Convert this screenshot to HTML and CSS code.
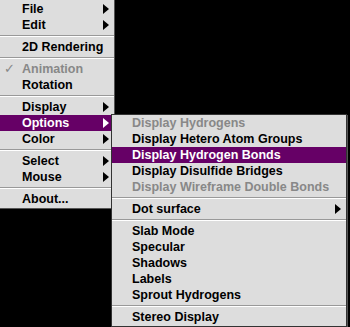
FILE: index.html
```html
<!DOCTYPE html>
<html lang="en">
<head>
    <meta charset="UTF-8">
    <title>menu</title>
    <link rel="stylesheet" href="styles.css">
</head>
<body>
    <div class="menu menu--main">
        <div class="menu__item menu__item--sub">File</div>
        <div class="menu__item menu__item--sub">Edit</div>
        <div class="menu__sep"></div>
        <div class="menu__item">2D Rendering</div>
        <div class="menu__sep"></div>
        <div class="menu__item menu__item--off menu__item--check">Animation</div>
        <div class="menu__item">Rotation</div>
        <div class="menu__sep"></div>
        <div class="menu__item menu__item--sub">Display</div>
        <div class="menu__item menu__item--sub menu__item--on">Options</div>
        <div class="menu__item menu__item--sub">Color</div>
        <div class="menu__sep"></div>
        <div class="menu__item menu__item--sub">Select</div>
        <div class="menu__item menu__item--sub">Mouse</div>
        <div class="menu__sep"></div>
        <div class="menu__item">About...</div>
    </div>
    <div class="menu menu--popup">
        <div class="menu__item menu__item--off">Display Hydrogens</div>
        <div class="menu__item">Display Hetero Atom Groups</div>
        <div class="menu__item menu__item--on">Display Hydrogen Bonds</div>
        <div class="menu__item">Display Disulfide Bridges</div>
        <div class="menu__item menu__item--off">Display Wireframe Double Bonds</div>
        <div class="menu__sep"></div>
        <div class="menu__item menu__item--sub">Dot surface</div>
        <div class="menu__sep"></div>
        <div class="menu__item">Slab Mode</div>
        <div class="menu__item">Specular</div>
        <div class="menu__item">Shadows</div>
        <div class="menu__item">Labels</div>
        <div class="menu__item">Sprout Hydrogens</div>
        <div class="menu__sep"></div>
        <div class="menu__item">Stereo Display</div>
    </div>
</body>
</html>
```

FILE: styles.css
```css
body {
    margin:0;
    background:#000;
    font:bold 12.5px/16px "Liberation Sans", Arial, sans-serif;
    color:#000;
}
.menu {
    background:#dddddd;
    padding:1px 0;
}
.menu--main {
    width:114px;
    border-right:1px solid #555;
    border-bottom:1px solid #555;
}
.menu--popup {
    position:absolute;
    left:111px;
    top:114px;
    width:234px;
    border:1px solid #333;
    padding:0 0 1px;
    box-shadow:1px 1px 0 #555;
}
.menu__item {
    position:relative;
    height:16px;
    padding-left:22px;
    white-space:nowrap;
}
.menu--popup .menu__item {
    padding-left:20px;
}
.menu__item--off {
    color:#888;
}
.menu__item--on {
    background:#660066;
    color:#fff;
}
.menu__item--check:before {
    content:"\2713";
    position:absolute;
    left:4px;
    top:0;
    font-weight:normal;
    color:#888;
}
.menu__item--sub:after {
    content:"";
    position:absolute;
    right:5px;
    top:3px;
    border-left:6px solid #000;
    border-top:5px solid transparent;
    border-bottom:5px solid transparent;
}
.menu__item--on.menu__item--sub:after {
    border-left-color:#fff;
}
.menu__sep {
    height:0;
    margin:2px 0;
    border-top:1px solid #999;
    border-bottom:1px solid #fff;
}
```
